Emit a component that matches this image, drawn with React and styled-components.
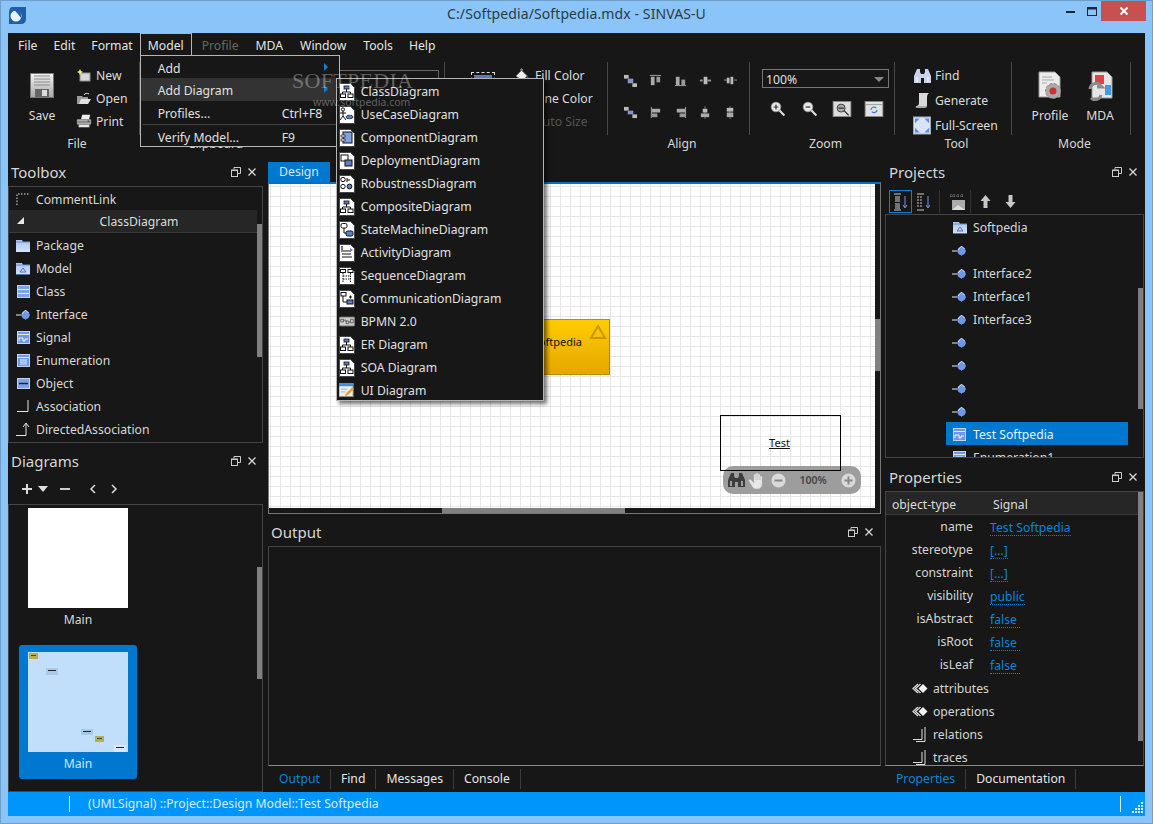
import React from "react";
import styled, { createGlobalStyle } from "styled-components";

const FONT = `"Noto Sans", "Open Sans", sans-serif`;
const FS = "12.2px";

const GlobalStyle = createGlobalStyle`
  html, body { margin: 0; padding: 0; background: #8ac4f9; }
  #root { width: 1153px; height: 824px; }
  * { box-sizing: border-box; }
`;

const Window = styled.div`
  position: relative; width: 1153px; height: 824px; overflow: hidden;
  background: #8ac4f9; box-shadow: inset 0 0 0 1px #6f9ecb;
  font: ${FS}/16px ${FONT}; color: #dcdcdc;
`;
const TitleBar = styled.div`
  height: 33px; display: grid; grid-template-columns: 1fr auto 1fr; align-items: start;
`;
const AppIcon = styled.div` padding: 7px 0 0 9px; height: 28px; `;
const Title = styled.div` font-size: 14px; line-height: 20px; padding-top: 4px; color: #2e3a46; letter-spacing: 0.1px; `;
const WinControls = styled.div` display: flex; justify-content: flex-end; align-items: flex-start; padding: 1px 7px 0 0; `;
const WinBtn = styled.div`
  width: ${p => p.$w}px; height: 20px; display: flex; align-items: center; justify-content: center;
  background: ${p => p.$bg || "transparent"};
`;
const Body = styled.div` margin: 0 8px; height: 783px; background: #171717; display: flex; flex-direction: column; `;
const MenuBar = styled.div` height: 25px; flex: none; display: flex; align-items: flex-start; padding-left: 2px; position: relative; z-index: 5; `;
const MenuItem = styled.div`
  position: relative; height: 22px; line-height: 23px; padding: 0 7px; margin-left: ${p => p.$ml || 0}px;
  color: ${p => (p.$disabled ? "#666" : "#e4e4e4")};
  border: 1px solid ${p => (p.$open ? "#b5b5b5" : "transparent")};
  border-bottom: 0;
`;
const Dropdown = styled.div`
  position: absolute; left: -1px; top: 21px; width: 200px; height: 92px; background: #171717;
  border: 1px solid #b5b5b5; z-index: 6;
`;
const DropRow = styled.div`
  display: flex; align-items: center; position: relative; height: ${p => p.$h || 23}px; padding: ${p => p.$pt || 0}px 0 0 17px;
  background: ${p => (p.$active ? "#333" : "transparent")};
  color: #e0e0e0; line-height: 16px;
`;
const Shortcut = styled.span` position: absolute; left: 141px; `;
const SubArrow = styled.span`
  position: absolute; left: 183px; top: 7px; width: 0; height: 0;
  border-left: 4px solid #0a80d8; border-top: 4px solid transparent; border-bottom: 4px solid transparent;
`;
const DropSep = styled.div` height: 1px; background: #444; margin: 0 2px; `;
const Submenu = styled.div`
  position: absolute; left: 195px; top: 0; width: 208px; height: 323px; padding-top: 1px;
  background: #171717; border: 1px solid #b5b5b5; box-shadow: 3px 3px 4px rgba(0,0,0,.55);
`;
const SubRow = styled.div` height: 23px; display: flex; align-items: center; gap: 6px; padding-left: 2px; color: #e0e0e0; `;
const SubIcon = styled.div` width: 16px; height: 18px; display: flex; align-items: center; justify-content: center; `;

const Ribbon = styled.div` height: 100px; flex: none; display: flex; padding-top: 4px; `;
const Group = styled.div` width: ${p => p.$w}px; flex: none; `;
const GroupBody = styled.div`
  height: 73px; border-right: 1px solid #484848;
  display: ${p => (p.$block ? "block" : "flex")}; padding: ${p => p.$pad || "0"};
`;
const GroupLabel = styled.div`
  text-align: center; padding-left: 6px; height: 20px; line-height: 18px; color: #d8d8d8;
`;
const BigBtn = styled.div`
  width: ${p => p.$w}px; flex: none; display: flex; flex-direction: column; align-items: center; padding-top: 6px;
`;
const BigIcon = styled.div` height: 35px; display: flex; align-items: center; justify-content: center; margin-bottom: 5px; width: 100%; `;
const Stack = styled.div` display: flex; flex-direction: column; padding-top: ${p => p.$top || 2}px; `;
const SmallBtn = styled.div`
  display: flex; flex: none; align-items: center; gap: ${p => p.$gap || 4}px; height: ${p => p.$h || 23}px;
  color: ${p => (p.$disabled ? "#555" : "#dcdcdc")}; white-space: nowrap;
`;
const IconBox = styled.div` width: ${p => p.$w || 16}px; height: 18px; display: flex; align-items: center; justify-content: center; flex: none; `;
const FontCombo = styled.div`
  margin: 8px 0 0 55px; width: 99px; height: 19px; border: 1px solid #666; border-left: 0; position: relative;
`;
const ComboArrow = styled.span`
  position: absolute; right: 4px; top: 7px; width: 0; height: 0;
  border-top: 5px solid #888; border-left: 5px solid transparent; border-right: 5px solid transparent;
`;
const DashBox = styled.div`
  width: 24px; height: 20px; margin: 10px 20px 0 26px; flex: none; border: 1px dashed #ddd;
  background: #5d7bb8; background-clip: content-box; padding: 2px;
`;
const AlignGrid = styled.div`
  display: grid; grid-template-columns: repeat(5, 25px); grid-auto-rows: 32px; padding: 2px 0 0 10px; align-items: center; justify-items: center;
`;
const ZoomCombo = styled.div`
  width: 127px; height: 19px; border: 1px solid #777; position: relative; padding-left: 3px; line-height: 19px; color: #e0e0e0;
`;
const ZoomRow = styled.div` display: grid; grid-template-columns: repeat(4, 32px); margin-top: 10px; justify-items: center; align-items: center; height: 22px; `;

const Main = styled.div` flex: 1; min-height: 0; display: flex; `;
const LeftCol = styled.div` width: 255px; margin-right: 5px; flex: none; display: flex; flex-direction: column; `;
const CenterCol = styled.div` width: 613px; margin-right: 4px; flex: none; display: flex; flex-direction: column; `;
const RightCol = styled.div` width: 259px; flex: none; display: flex; flex-direction: column; `;
const DockTitle = styled.div`
  height: ${p => p.$h || 28}px; flex: none; display: flex; align-items: center; justify-content: space-between;
  padding: ${p => p.$top || 0}px ${p => p.$r || 6}px 0 ${p => p.$l || 3}px; font-size: 15px; line-height: 20px; color: #d6d6d6; margin-top: ${p => p.$mt || 0}px;
`;
const DockBtns = styled.div` display: flex; gap: 6px; align-items: center; `;
const ListBox = styled.div`
  height: ${p => p.$h}px; flex: none; border: 1px solid #444; display: flex; overflow: hidden;
  ${p => (p.$foot ? `border-bottom-color: ${p.$foot};` : "")}
`;
const ListContent = styled.div` flex: 1; min-width: 0; overflow: hidden; `;
const Track = styled.div` width: 5px; flex: none; `;
const Thumb = styled.div` width: 5px; height: ${p => p.$h}px; margin-top: ${p => p.$top}px; background: #808080; `;
const ToolRow = styled.div` height: 23px; display: flex; align-items: center; gap: 5px; padding: 2px 0 0 6px; color: #d8d8d8; `;
const GroupHeader = styled.div`
  height: 23px; background: #262626; border-bottom: 1px solid #3a3a3a; display: flex; align-items: center; justify-content: center; position: relative; padding: 2px 0 0 12px;
`;
const Caret = styled.span`
  position: absolute; left: 8px; top: 7px; width: 0; height: 0;
  border-bottom: 7px solid #e8e8e8; border-left: 7px solid transparent;
`;
const DiagramBar = styled.div` height: 29px; flex: none; display: flex; align-items: center; padding: 0 0 1px 13px; `;
const DiagBtn = styled.div` width: ${p => p.$w}px; display: flex; justify-content: center; flex: none; `;
const Cards = styled.div` margin: -4px 0 0 10px; display: flex; flex-direction: column; gap: 10px; `;
const Card = styled.div`
  width: 118px; height: 134px; padding: 7px 9px 3px; border-radius: 3px; background: ${p => (p.$sel ? "#0078cf" : "transparent")};
`;
const Thumbnail = styled.div` position: relative; width: 100px; height: 100px; background: ${p => (p.$sel ? "#c1dffb" : "#fff")}; `;
const CardLabel = styled.div` height: 24px; line-height: 24px; text-align: center; color: ${p => (p.$sel ? "#cfe6fb" : "#d8d8d8")}; `;
const Mini = styled.div`
  position: absolute; left: ${p => p.$x}px; top: ${p => p.$y}px; width: ${p => p.$w}px; height: ${p => p.$h}px;
  background: ${p => p.$c}; display: flex; justify-content: center; padding-top: 2px;
  &::after { content: ""; width: 60%; height: 1px; background: ${p => p.$d}; }
`;

const TabStrip = styled.div` height: 24px; flex: none; padding-top: 4px; display: flex; `;
const DesignTab = styled.div` width: 62px; height: 20px; background: #0078cf; color: #dbe9f6; text-align: center; line-height: 20px; `;
const CanvasFrame = styled.div`
  height: 332px; flex: none; border: 1px solid #777; border-top: 2px solid #0072c6; display: flex; flex-direction: column;
`;
const CanvasRow = styled.div` flex: 1; min-height: 0; display: flex; `;
const Surface = styled.div`
  flex: 1; position: relative; overflow: hidden; background-color: #fff;
  background-image: linear-gradient(#e6e6e6 1px, transparent 1px), linear-gradient(90deg, #e6e6e6 1px, transparent 1px);
  background-size: 10px 10px; background-position: 1px 2px;
`;
const HTrack = styled.div` height: 5px; flex: none; `;
const HThumb = styled.div` height: 5px; width: ${p => p.$w}px; margin-left: ${p => p.$left}px; background: #808080; `;
const YellowNode = styled.div`
  position: absolute; left: 220px; top: 135px; width: 121px; height: 56px; border: 1px solid #b98b00;
  background: linear-gradient(#ffcc00, #e5a700); color: #111; font-size: 11px; line-height: 14px; text-align: right; padding: 15px 27px 0 0;
`;
const YellowTriangle = styled.svg` position: absolute; right: 2px; top: 4px; `;
const TestNode = styled.div`
  position: absolute; left: 451px; top: 231px; width: 121px; height: 56px; border: 1px solid #000; z-index: 2;
  display: flex; align-items: center; justify-content: center; color: #111; font-size: 11px; text-decoration: underline; padding-right: 2px;
`;
const ZoomPill = styled.div`
  position: absolute; left: 454px; top: 282px; width: 138px; height: 28px; border-radius: 10px; background: #9d9d9d; z-index: 1;
  display: grid; grid-template-columns: 16px 24px 20px 50px 20px; align-items: center; justify-items: center; padding-left: 5px;
`;
const PillText = styled.span` font-size: 10.5px; font-weight: 600; color: #444; `;
const OutputBox = styled.div` height: 220px; flex: none; border: 1px solid #444; border-bottom-color: #8a8a8a; `;
const BottomTabs = styled.div` height: 26px; flex: none; display: flex; padding: 3px 0 0 1px; `;
const BottomTab = styled.div`
  height: 20px; line-height: 20px; padding: 0 10px; border-right: 1px solid #3c3c3c;
  color: ${p => (p.$active ? "#0a84dc" : "#e6e6e6")};
`;
const ProjBar = styled.div` height: 28px; flex: none; display: flex; align-items: center; padding: 3px 0 0 4px; `;
const ProjBtn = styled.div`
  width: ${p => p.$w}px; height: 23px; flex: none; display: flex; align-items: center; justify-content: center;
  border: 1px solid ${p => (p.$sel ? "#0a7fd6" : "transparent")};
`;
const ProjSep = styled.div` width: 1px; height: 23px; background: #333; margin: 0 ${p => p.$r}px 0 ${p => p.$l}px; flex: none; `;
const TreeRow = styled.div`
  height: 23px; display: flex; align-items: center; gap: 6px; margin: 0 10px 0 60px; padding: 2px 0 0 6px;
  background: ${p => (p.$sel ? "#0078cf" : "transparent")}; color: ${p => (p.$sel ? "#e4f1fc" : "#d8d8d8")};
`;
const PropHeader = styled.div`
  height: 23px; background: #262626; border-bottom: 1px solid #3a3a3a; display: grid; grid-template-columns: 101px 1fr; padding: 3px 0 0 6px; align-items: center;
`;
const PropRow = styled.div` height: 23px; display: grid; grid-template-columns: 87px 1fr; column-gap: 17px; align-items: center; padding-top: 2px; `;
const PropLabel = styled.div` text-align: right; color: #d4d4d4; margin-top: -1px; `;
const PropValue = styled.span`
  justify-self: start; color: #0a84dc; border-bottom: 1px dotted #0a84dc; line-height: 15px; padding-right: ${p => p.$pr || 0}px;
`;
const PropNode = styled.div` height: 23px; display: flex; align-items: center; gap: 5px; padding: 2px 0 0 26px; color: #d4d4d4; `;
const StatusBar = styled.div` height: 24px; flex: none; background: #0095fb; display: flex; align-items: center; color: #d8edff; `;
const StatusSep = styled.div` width: 1px; height: 16px; background: #d8edff; margin-left: ${p => p.$l}px; flex: none; `;
const StatusText = styled.div` margin-left: 18px; width: 1032px; flex: none; white-space: nowrap; `;
const Grip = styled.svg` margin-left: 10px; margin-top: 6px; flex: none; `;
const Watermark = styled.div` position: absolute; left: 292px; top: 68px; z-index: 20; pointer-events: none; width: 140px; `;
const WmLogo = styled.div` font: 22px/25px "Liberation Serif", serif; letter-spacing: .3px; color: rgba(255,255,255,.33); `;
const WmUrl = styled.div` font: 10.5px/12px "Noto Sans", sans-serif; color: rgba(255,255,255,.33); margin: 3px 0 0 21px; `;

/* ---------- drawings ---------- */
const SaveIcon = () => (
  <svg width="24" height="25" viewBox="0 0 24 25">
    <defs><linearGradient id="sv" x1="0" y1="0" x2="0" y2="1"><stop offset="0" stopColor="#f2f2f2"/><stop offset="1" stopColor="#a8a8a8"/></linearGradient></defs>
    <rect x=".5" y=".5" width="23" height="24" fill="url(#sv)" stroke="#777"/>
    <path d="M4 3h16M4 6h16M4 9h16M4 12h16" stroke="#8a8a8a"/>
    <rect x="5" y="16" width="14" height="8" fill="#666"/><rect x="12" y="17" width="5" height="6" fill="#ddd"/>
  </svg>
);
const NewIcon = () => (
  <svg width="16" height="14" viewBox="0 0 16 14">
    <rect x="4" y="4" width="10" height="8" fill="#d8d8d8" stroke="#8c8c8c"/><path d="M4 0l1 2 2 1-2 1-1 2-1-2-2-1 2-1z" fill="#f2ee6a"/>
  </svg>
);
const OpenIcon = () => (
  <svg width="16" height="14" viewBox="0 0 16 14">
    <path d="M1 4h5l1 1h5v7H1z" fill="#9a9a9a"/><path d="M3 12l2-5h10l-3 5z" fill="#e2e2e2"/><path d="M8 3c1-2 3-2 5-1" fill="none" stroke="#ddd"/>
  </svg>
);
const PrintIcon = () => (
  <svg width="18" height="15" viewBox="0 0 18 15">
    <rect x="5" y="0" width="9" height="5" fill="#eee" transform="skewX(-15) translate(2 0)"/>
    <rect x="1" y="5" width="16" height="6" rx="1" fill="#aaa"/><rect x="3" y="11" width="12" height="3" fill="#e6e6e6"/>
    <path d="M1 8h16" stroke="#666"/><circle cx="14" cy="7" r="1" fill="#555"/>
  </svg>
);
const FillIcon = () => (
  <svg width="17" height="16" viewBox="0 0 17 16">
    <path d="M1 8l6-6 6 6-5 5z" fill="#f2f2f2" stroke="#777"/><path d="M6 2c0-2 2-2 2 0" fill="none" stroke="#ccc"/>
    <path d="M13 8c2 2 3 4 2 7h-2z" fill="#3d6fc4"/>
  </svg>
);
const DIAG = {
  class: <g><rect x="5" y="3" width="5" height="3" fill="#5b7fc4" stroke="#111" strokeWidth=".8"/><path d="M7.500 6v3M3.500 11V9h8v2" stroke="#111" fill="none"/><rect x="1.500" y="11" width="5" height="3.500" fill="#fff" stroke="#111"/><rect x="9" y="11" width="5" height="3.500" fill="#fff" stroke="#111"/></g>,
  usecase: <g><circle cx="4" cy="3.500" r="1.600" fill="none" stroke="#111"/><path d="M4 5v5M1 7h6M4 10l-3 4M4 10l3 4" stroke="#111" fill="none"/><ellipse cx="10.500" cy="11" rx="3.500" ry="1.800" fill="#5b7fc4" stroke="#111" strokeWidth=".7"/></g>,
  component: <g><rect x="4" y="3" width="9" height="11" fill="#7fa3e0" stroke="#111"/><rect x="2" y="6" width="4" height="2" fill="#fff" stroke="#111" strokeWidth=".7"/><rect x="2" y="10" width="4" height="2" fill="#fff" stroke="#111" strokeWidth=".7"/></g>,
  deployment: <g><rect x="2" y="3" width="7" height="6" fill="#fff" stroke="#111"/><rect x="6" y="8" width="7" height="6" fill="#5b7fc4" stroke="#111"/></g>,
  robustness: <g><circle cx="4" cy="4.500" r="2.200" fill="#fff" stroke="#111"/><path d="M8 3v4M8 5h3" stroke="#111"/><circle cx="4" cy="11.500" r="2.200" fill="#fff" stroke="#111"/><circle cx="10.500" cy="11.500" r="2.400" fill="#5b7fc4" stroke="#111"/></g>,
  state: <g><rect x="2" y="2.500" width="6" height="4.500" rx="1.500" fill="#fff" stroke="#111"/><path d="M5 7v5h2" stroke="#111" fill="none"/><rect x="7" y="10" width="7" height="5" rx="1.500" fill="#5b7fc4" stroke="#111"/></g>,
  activity: <g><path d="M3 2v4M2 7h10M3 10h9M3 13h10" stroke="#111" strokeWidth="1.200"/><path d="M11 4l3 2-3 2" fill="#5b7fc4"/></g>,
  sequence: <g><rect x="1.500" y="2.500" width="5" height="3" fill="#fff" stroke="#111"/><rect x="9" y="2.500" width="5" height="3" fill="#fff" stroke="#111"/><path d="M4 6v9M11.500 6v9M4 9h7M4 12h7" stroke="#111" strokeDasharray="1.500 1" fill="none"/></g>,
  comm: <g><rect x="2" y="2.500" width="5" height="3.500" fill="#fff" stroke="#111"/><path d="M4 6v6h4" stroke="#111" fill="none"/><rect x="8" y="10" width="6" height="4" fill="#5b7fc4" stroke="#111"/><path d="M10 7h3M11.500 5.500v3" stroke="#111"/></g>,
};
const DocIcon = ({ kind }) => (
  <svg width="16" height="18" viewBox="0 0 16 18">
    <path d="M.5.5h11l4 4v13H.5z" fill="#fff" stroke="#444"/>
    {DIAG[kind]}
  </svg>
);
const BpmnIcon = () => (
  <svg width="18" height="11" viewBox="0 0 18 11"><rect x=".5" y=".5" width="17" height="10" rx="1" fill="#cfcfcf" stroke="#777"/><path d="M2 3h3v3H2zM8 5h3v3H8zM13 3h3v4h-3zM5 4h3v2M11 6h2" fill="none" stroke="#555"/></svg>
);
const UiIcon = () => (
  <svg width="17" height="17" viewBox="0 0 17 17"><rect x="0" y="1" width="15" height="14" fill="#f0f0f0" stroke="#888"/><rect x="0" y="1" width="15" height="3" fill="#3d8fd8"/><path d="M2 7h7M2 10h5" stroke="#aaa"/><path d="M6 15l2-4 6-6 2 2-6 6z" fill="#e8a33a"/></svg>
);
const FolderIcon = ({ tri }) => (
  <svg width="14" height="14" viewBox="0 0 14 14">
    <defs><linearGradient id="fo" x1="0" y1="0" x2="0" y2="1"><stop offset="0" stopColor="#a8c4f5"/><stop offset="1" stopColor="#d6e4fb"/></linearGradient></defs>
    <path d="M0 1h6l1 2h7v10H0z" fill="url(#fo)"/><path d="M0 3h14" stroke="#6f8fcc"/>
    {tri && <path d="M4 10l3-4 3 4z" fill="none" stroke="#5270ad"/>}
    {tri && <path d="M0 12.500h14" stroke="#5270ad"/>}
  </svg>
);
const ClassIcon = () => (
  <svg width="13" height="13" viewBox="0 0 13 13"><rect x=".5" y=".5" width="12" height="12" fill="#7ea2e6" stroke="#b9cff5"/><path d="M1 4.500h11M1 8.500h11" stroke="#e7eefb"/></svg>
);
const LollipopIcon = () => (
  <svg width="15" height="12" viewBox="0 0 15 12"><path d="M0 6h5" stroke="#eee"/><path d="M5 6l4.500-5 4.500 5-4.500 5z" fill="#6f97e8"/><circle cx="9.500" cy="6" r="4" fill="#6f97e8"/><path d="M6 5l3.500-4 3 3" fill="none" stroke="#f0f4fc" strokeWidth=".8"/></svg>
);
const SignalIcon = () => (
  <svg width="13" height="13" viewBox="0 0 13 13"><rect x=".5" y=".5" width="12" height="12" fill="#6f97e8" stroke="#c2d4f5"/><path d="M1 3.500h11" stroke="#e7eefb"/><path d="M2 10V7h4v3h2V8h3" fill="none" stroke="#f2f6fd"/></svg>
);
const EnumIcon = () => (
  <svg width="13" height="13" viewBox="0 0 13 13"><rect x=".5" y=".5" width="12" height="12" fill="#6f97e8" stroke="#c2d4f5"/><path d="M1 3.500h11M3 6h7M3 8h7M3 10h7" stroke="#e7eefb"/></svg>
);
const ObjectIcon = () => (
  <svg width="13" height="11" viewBox="0 0 13 11"><rect x=".5" y=".5" width="12" height="10" fill="#7ea2e6" stroke="#c2d4f5"/><path d="M2 5.500h9" stroke="#223" strokeWidth="1.500"/></svg>
);
const AssocIcon = () => (
  <svg width="14" height="13" viewBox="0 0 14 13"><path d="M1 11.500h11V0" fill="none" stroke="#e6e6e6"/></svg>
);
const DirAssocIcon = () => (
  <svg width="14" height="15" viewBox="0 0 14 15"><path d="M0 13.500h10V2M7 5l3-4 3 4" fill="none" stroke="#e6e6e6"/></svg>
);
const CommentLinkIcon = () => (
  <svg width="14" height="13" viewBox="0 0 14 13"><path d="M1 12V1h13" fill="none" stroke="#e6e6e6" strokeDasharray="1.500 1.500"/></svg>
);
const ALIGN = [
  [[0, 1, 5, 4, "#bbb"], [4, 5, 6, 5, "#7e99c9"], [9, 10, 5, 4, "#bbb"]],
  [[1, 1, 12, 1, "#aaa"], [2, 3, 4, 9, "#aaa"], [8, 3, 4, 6, "#999"]],
  [[1, 12, 12, 1, "#aaa"], [2, 3, 4, 9, "#aaa"], [8, 6, 4, 6, "#999"]],
  [[1, 6, 3, 2, "#999"], [5, 3, 4, 8, "#bbb"], [9, 6, 4, 2, "#999"]],
  [[0, 6, 3, 1, "#999"], [3, 4, 3, 6, "#bbb"], [7, 3, 3, 8, "#bbb"], [11, 6, 3, 1, "#999"]],
  [[0, 1, 5, 4, "#bbb"], [4, 5, 6, 4, "#7e99c9"], [9, 9, 5, 4, "#bbb"]],
  [[2, 1, 1, 12, "#aaa"], [3, 3, 9, 4, "#aaa"], [3, 8, 6, 4, "#999"]],
  [[12, 1, 1, 12, "#aaa"], [3, 3, 9, 4, "#aaa"], [6, 8, 6, 4, "#999"]],
  [[6, 0, 1, 14, "#777"], [4, 3, 5, 4, "#bbb"], [2, 8, 9, 4, "#aaa"]],
  [[6, 0, 1, 14, "#777"], [3, 2, 7, 4, "#bbb"], [3, 7, 7, 5, "#aaa"]],
];
const AlignIcon = ({ rects }) => (
  <svg width="13" height="13" viewBox="0 0 14 14">
    {rects.map((r, i) => <rect key={i} x={r[0]} y={r[1]} width={r[2]} height={r[3]} fill={r[4]} />)}
  </svg>
);
const MagIcon = ({ sign }) => (
  <svg width="16" height="16" viewBox="0 0 20 20">
    <path d="M11 11l7 7" stroke="#ddd" strokeWidth="2.600"/><circle cx="7.500" cy="7.500" r="6" fill="#e8e8e8" stroke="#999"/>
    <path d={sign === "+" ? "M4.500 7.500h6M7.500 4.500v6" : "M4.500 7.500h6"} stroke="#333" strokeWidth="1.500"/>
  </svg>
);
const FrameMagIcon = () => (
  <svg width="20" height="16" viewBox="0 0 21 18"><rect x=".5" y=".5" width="20" height="17" fill="#ddd" stroke="#888"/><circle cx="9.500" cy="8" r="4.500" fill="#aaa" stroke="#333"/><path d="M6.500 8h6M13 11l5 5" stroke="#333" strokeWidth="1.300"/></svg>
);
const FrameRefreshIcon = () => (
  <svg width="20" height="16" viewBox="0 0 21 18"><rect x=".5" y=".5" width="20" height="17" fill="#e2e2e2" stroke="#888"/><path d="M1 4h19" stroke="#999"/><path d="M7 10a3.500 3.500 0 0 1 6-2M14 10a3.500 3.500 0 0 1-6 2" fill="none" stroke="#3f78e0" strokeWidth="1.300"/></svg>
);
const BinocIcon = ({ c = "#c9d4ea" }) => (
  <svg width="17" height="16" viewBox="0 0 17 16">
    <path d="M3 1h3v3l1 2v9H0V8z" fill={c}/><path d="M14 1h-3v3l-1 2v9h7V8z" fill={c}/><rect x="7" y="6" width="3" height="4" fill={c}/>
    <path d="M3 9v5M14 9v5" stroke="#fff"/>
  </svg>
);
const ScrollIcon = () => (
  <svg width="15" height="17" viewBox="0 0 15 17"><path d="M4 1h10c-1 1-2 2-2 4v9H1c2 0 3-1 3-3z" fill="#d8d8d8"/><path d="M1 14c-1 1 0 2 1 2h8c1 0 2-1 2-2z" fill="#aaa"/></svg>
);
const FullIcon = () => (
  <svg width="19" height="19" viewBox="0 0 19 19"><rect x=".5" y=".5" width="18" height="18" fill="#d8e4fa" stroke="#aaa"/><path d="M2 2h5L2 7zM17 2h-5l5 5zM2 17h5l-5-5zM17 17h-5l5-5z" fill="#5b8de0"/></svg>
);
const ProfileIcon = () => (
  <svg width="28" height="30" viewBox="0 0 28 30">
    <path d="M3 1h16l5 5v20H3z" fill="#ececec" stroke="#999"/><path d="M6 6h10M6 9h12M6 12h5" stroke="#aaa"/>
    <circle cx="17" cy="20" r="7.500" fill="#aaa" stroke="#888" strokeDasharray="3 1.500"/><circle cx="17" cy="20" r="3.500" fill="#c8323a"/>
  </svg>
);
const MdaIcon = () => (
  <svg width="28" height="30" viewBox="0 0 28 30">
    <path d="M6 1h15l5 5v21H6z" fill="#e6e6e6" stroke="#999"/><rect x="9" y="4" width="9" height="9" fill="#e0404a"/>
    <rect x="19" y="14" width="6" height="10" fill="#3f9be8"/>
    <path d="M4 18a6 6 0 0 1 10-4l2 2h-5M15 24a6 6 0 0 1-10 3" fill="none" stroke="#8b8b8b" strokeWidth="3"/>
  </svg>
);
const FloatIcon = () => (
  <svg width="10" height="10" viewBox="0 0 10 10"><path d="M3 2.500V.5h6.500v6H7" fill="none" stroke="#ccc"/><rect x=".5" y="3" width="6" height="6.500" fill="none" stroke="#ccc"/><path d="M1 3.500h5" stroke="#ccc"/></svg>
);
const CloseIcon = () => (
  <svg width="10" height="10" viewBox="0 0 10 10"><path d="M1.500 1.500l7 7M8.500 1.500l-7 7" stroke="#ddd" strokeWidth="1.200"/></svg>
);
const SortNumIcon = ({ az }) => (
  <svg width="16" height="18" viewBox="0 0 16 18">
    <path d="M1 1h7M1 17h7" stroke="#ccc"/>
    {az ? <path d="M1 4h6M1 7h6M1 10h6M1 13h6" stroke="#ccc" strokeDasharray="2 1"/> : <path d="M2 4h5M2 6h5M2 8h5M2 11h5M2 13h5M2 15h5" stroke="#ccc"/>}
    <path d="M12 3v11M10 12l2 3 2-3" fill="none" stroke="#6f97e8"/>
  </svg>
);
const ProjFrameIcon = () => (
  <svg width="16" height="18" viewBox="0 0 16 18"><path d="M1 1v3M4 1v3M8 1v3M12 1v3M0 3h14" stroke="#888" strokeDasharray="1 1"/><rect x="2" y="7" width="13" height="10" fill="#aaa"/><path d="M2 17l6-5 7 5z" fill="#ddd"/></svg>
);
const UpArrow = () => (
  <svg width="11" height="13" viewBox="0 0 11 13"><path d="M5.500 0l5 6H7.500v7h-4V6H.5z" fill="#c8c8c8"/></svg>
);
const DownArrow = () => (
  <svg width="11" height="13" viewBox="0 0 11 13"><path d="M5.500 13l5-6H7.500V0h-4v7H.5z" fill="#c8c8c8"/></svg>
);
const StackIcon = () => (
  <svg width="16" height="11" viewBox="0 0 16 11"><path d="M6 1L1 5.500 6 10M8.500 1l-5 4.500 5 4.500" fill="none" stroke="#ddd" strokeWidth="1.200"/><path d="M11 1l4.500 4.500L11 10 6.500 5.500z" fill="#f0f0f0"/></svg>
);
const RelIcon = () => (
  <svg width="16" height="15" viewBox="0 0 16 15"><path d="M1 12.500h9V2M4 14.500h9V0" fill="none" stroke="#ddd"/></svg>
);
const PillBinoc = () => <BinocIcon c="#3d3d3d" />;
const HandIcon = () => (
  <svg width="16" height="17" viewBox="0 0 16 17">
    <path d="M1 9l3 5c1 2 2 3 5 3s5-2 5-5V5a1 1 0 0 0-2 0v3V3a1 1 0 0 0-2 0v5V2a1 1 0 0 0-2 0v6V3a1 1 0 0 0-2 0v8L3 8C2 7 0 8 1 9z" fill="#e8e8e8" stroke="#bdbdbd" strokeWidth=".5"/>
  </svg>
);
const RoundBtn = ({ plus }) => (
  <svg width="15" height="15" viewBox="0 0 15 15"><circle cx="7.500" cy="7.500" r="7" fill="#d9d9d9"/><path d={plus ? "M3.500 7.500h8M7.500 3.500v8" : "M3.500 7.500h8"} stroke="#888" strokeWidth="2"/></svg>
);

const SUBMENU = [
  ["ClassDiagram", "class"], ["UseCaseDiagram", "usecase"], ["ComponentDiagram", "component"], ["DeploymentDiagram", "deployment"],
  ["RobustnessDiagram", "robustness"], ["CompositeDiagram", "class"], ["StateMachineDiagram", "state"], ["ActivityDiagram", "activity"],
  ["SequenceDiagram", "sequence"], ["CommunicationDiagram", "comm"], ["BPMN 2.0", "bpmn"], ["ER Diagram", "class"], ["SOA Diagram", "class"], ["UI Diagram", "ui"],
];
const TOOLS = [
  ["Package", <FolderIcon />], ["Model", <FolderIcon tri />], ["Class", <ClassIcon />], ["Interface", <LollipopIcon />], ["Signal", <SignalIcon />],
  ["Enumeration", <EnumIcon />], ["Object", <ObjectIcon />], ["Association", <AssocIcon />], ["DirectedAssociation", <DirAssocIcon />],
];
const TREE = [
  ["Softpedia", <FolderIcon tri />], ["", <LollipopIcon />], ["Interface2", <LollipopIcon />], ["Interface1", <LollipopIcon />], ["Interface3", <LollipopIcon />],
  ["", <LollipopIcon />], ["", <LollipopIcon />], ["", <LollipopIcon />], ["", <LollipopIcon />], ["Test Softpedia", <SignalIcon />, true], ["Enumeration1", <EnumIcon />],
];
const PROPS = [["name", "Test Softpedia", 0], ["stereotype", "[...]", 0], ["constraint", "[...]", 0], ["visibility", "public", 0], ["isAbstract", "false", 3], ["isRoot", "false", 3], ["isLeaf", "false", 3]];
const NODES = [["attributes", <StackIcon />], ["operations", <StackIcon />], ["relations", <RelIcon />], ["traces", <RelIcon />]];
const MINIS = [[1, 1, 9, 6, "#b9ae4c", "#444"], [18, 16, 12, 7, "#a9c9ea", "#223"], [53, 77, 12, 6, "#a9c9ea", "#223"], [67, 84, 9, 6, "#b9ae4c", "#444"], [86, 93, 12, 7, "#d7e9fb", "#223"]];

const DockHeader = ({ title, ...rest }) => (
  <DockTitle {...rest}>
    <span>{title}</span>
    <DockBtns><FloatIcon /><CloseIcon /></DockBtns>
  </DockTitle>
);

export default function App() {
  return (
    <Window>
      <GlobalStyle />
      <TitleBar>
        <AppIcon>
          <svg width="17" height="17" viewBox="0 0 17 17">
            <path d="M3 0h14v12c0 3-2 5-5 5H0V6c0-3 1-6 3-6z" fill="#1f5fa8"/>
            <circle cx="7" cy="9" r="5.500" fill="#e9f2fb"/><path d="M5 3c5-1 8 2 7 8-2-3-4-5-7-8z" fill="#1f5fa8"/>
          </svg>
        </AppIcon>
        <Title>C:/Softpedia/Softpedia.mdx - SINVAS-U</Title>
        <WinControls>
          <WinBtn $w={24}><svg width="9" height="3" viewBox="0 0 9 3"><rect width="9" height="2" y="1" fill="#1c2733"/></svg></WinBtn>
          <WinBtn $w={19}><svg width="10" height="9" viewBox="0 0 10 9"><rect x=".5" y=".5" width="9" height="8" fill="none" stroke="#1c2733"/><path d="M0 1.500h10" stroke="#1c2733" strokeWidth="2"/></svg></WinBtn>
          <WinBtn $w={45} $bg="#c75050"><svg width="10" height="10" viewBox="0 0 10 10"><path d="M1.500 1.500l7 7M8.500 1.500l-7 7" stroke="#fff" strokeWidth="2"/></svg></WinBtn>
        </WinControls>
      </TitleBar>
      <Body>
        <MenuBar>
          <MenuItem>File</MenuItem>
          <MenuItem>Edit</MenuItem>
          <MenuItem>Format</MenuItem>
          <MenuItem $open $ml={-1}>Model
            <Dropdown>
              <DropRow $h={22} $pt={3}>Add<SubArrow /></DropRow>
              <DropRow $active $pt={2}>Add Diagram<SubArrow />
                <Submenu>
                  {SUBMENU.map(([label, kind]) => (
                    <SubRow key={label}>
                      <SubIcon>{kind === "bpmn" ? <BpmnIcon /> : kind === "ui" ? <UiIcon /> : <DocIcon kind={kind} />}</SubIcon>
                      {label}
                    </SubRow>
                  ))}
                </Submenu>
              </DropRow>
              <DropRow $h={23} $pt={2}>Profiles...<Shortcut>Ctrl+F8</Shortcut></DropRow>
              <DropSep />
              <DropRow $h={22} $pt={3}>Verify Model...<Shortcut>F9</Shortcut></DropRow>
            </Dropdown>
          </MenuItem>
          <MenuItem $disabled $ml={2}>Profile</MenuItem>
          <MenuItem $ml={1}>MDA</MenuItem>
          <MenuItem $ml={1}>Window</MenuItem>
          <MenuItem $ml={1}>Tools</MenuItem>
          <MenuItem>Help</MenuItem>
        </MenuBar>
        <Ribbon>
          <Group $w={132}>
            <GroupBody>
              <BigBtn $w={68}><BigIcon><SaveIcon /></BigIcon>Save</BigBtn>
              <Stack>
                <SmallBtn><IconBox><NewIcon /></IconBox>New</SmallBtn>
                <SmallBtn><IconBox><OpenIcon /></IconBox>Open</SmallBtn>
                <SmallBtn><IconBox><PrintIcon /></IconBox>Print</SmallBtn>
              </Stack>
            </GroupBody>
            <GroupLabel>File</GroupLabel>
          </Group>
          <Group $w={145}><GroupBody /><GroupLabel>Clipboard</GroupLabel></Group>
          <Group $w={160}><GroupBody><FontCombo><ComboArrow /></FontCombo></GroupBody><GroupLabel /></Group>
          <Group $w={163}>
            <GroupBody>
              <DashBox />
              <Stack>
                <SmallBtn><IconBox><FillIcon /></IconBox>Fill Color</SmallBtn>
                <SmallBtn><IconBox />Line Color</SmallBtn>
                <SmallBtn $disabled><IconBox />Auto Size</SmallBtn>
              </Stack>
            </GroupBody>
            <GroupLabel />
          </Group>
          <Group $w={142}>
            <GroupBody $block>
              <AlignGrid>{ALIGN.map((r, i) => <AlignIcon key={i} rects={r} />)}</AlignGrid>
            </GroupBody>
            <GroupLabel>Align</GroupLabel>
          </Group>
          <Group $w={145}>
            <GroupBody $block $pad="7px 0 0 12px">
              <ZoomCombo>100%<ComboArrow /></ZoomCombo>
              <ZoomRow><MagIcon sign="+" /><MagIcon sign="-" /><FrameMagIcon /><FrameRefreshIcon /></ZoomRow>
            </GroupBody>
            <GroupLabel>Zoom</GroupLabel>
          </Group>
          <Group $w={117}>
            <GroupBody $pad="0 0 0 18px">
              <Stack $top={1}>
                <SmallBtn $h={25}><IconBox $w={18}><BinocIcon /></IconBox>Find</SmallBtn>
                <SmallBtn $h={25}><IconBox $w={18}><ScrollIcon /></IconBox>Generate</SmallBtn>
                <SmallBtn $h={25}><IconBox $w={18}><FullIcon /></IconBox>Full-Screen</SmallBtn>
              </Stack>
            </GroupBody>
            <GroupLabel>Tool</GroupLabel>
          </Group>
          <Group $w={119}>
            <GroupBody $pad="0 0 0 13px">
              <BigBtn $w={50}><BigIcon><ProfileIcon /></BigIcon>Profile</BigBtn>
              <BigBtn $w={50}><BigIcon><MdaIcon /></BigIcon>MDA</BigBtn>
            </GroupBody>
            <GroupLabel>Mode</GroupLabel>
          </Group>
        </Ribbon>
        <Main>
          <LeftCol>
            <DockHeader title="Toolbox" />
            <ListBox $h={257}>
              <ListContent>
                <ToolRow><IconBox><CommentLinkIcon /></IconBox>CommentLink</ToolRow>
                <GroupHeader><Caret />ClassDiagram</GroupHeader>
                {TOOLS.map(([label, icon]) => <ToolRow key={label}><IconBox>{icon}</IconBox>{label}</ToolRow>)}
              </ListContent>
              <Track><Thumb $top={37} $h={133} /></Track>
            </ListBox>
            <DockHeader title="Diagrams" $mt={4} />
            <DiagramBar>
              <DiagBtn $w={12}><svg width="10" height="10" viewBox="0 0 10 10"><path d="M0 5h10M5 0v10" stroke="#ddd" strokeWidth="2"/></svg></DiagBtn>
              <DiagBtn $w={20}><svg width="10" height="6" viewBox="0 0 10 6"><path d="M0 0h10L5 6z" fill="#ddd"/></svg></DiagBtn>
              <DiagBtn $w={24}><svg width="10" height="2" viewBox="0 0 10 2"><path d="M0 1h10" stroke="#ccc" strokeWidth="2"/></svg></DiagBtn>
              <DiagBtn $w={30}><svg width="7" height="10" viewBox="0 0 7 10"><path d="M6 1L2 5l4 4" fill="none" stroke="#ddd" strokeWidth="1.500"/></svg></DiagBtn>
              <DiagBtn $w={14}><svg width="7" height="10" viewBox="0 0 7 10"><path d="M1 1l4 4-4 4" fill="none" stroke="#ddd" strokeWidth="1.500"/></svg></DiagBtn>
            </DiagramBar>
            <ListBox $h={288}>
              <ListContent>
                <Cards>
                  <Card><Thumbnail /><CardLabel>Main</CardLabel></Card>
                  <Card $sel>
                    <Thumbnail $sel>{MINIS.map((m, i) => <Mini key={i} $x={m[0]} $y={m[1]} $w={m[2]} $h={m[3]} $c={m[4]} $d={m[5]} />)}</Thumbnail>
                    <CardLabel $sel>Main</CardLabel>
                  </Card>
                </Cards>
              </ListContent>
              <Track><Thumb $top={62} $h={112} /></Track>
            </ListBox>
          </LeftCol>
          <CenterCol>
            <TabStrip><DesignTab>Design</DesignTab></TabStrip>
            <CanvasFrame>
              <CanvasRow>
                <Surface>
                  <YellowNode>
                    Test Softpedia
                    <YellowTriangle width="18" height="16" viewBox="0 0 18 16"><path d="M9 2l7 12H2z" fill="none" stroke="#c99500" strokeWidth="2"/></YellowTriangle>
                  </YellowNode>
                  <TestNode>Test</TestNode>
                  <ZoomPill>
                    <PillBinoc /><HandIcon /><RoundBtn /><PillText>100%</PillText><RoundBtn plus />
                  </ZoomPill>
                </Surface>
                <Track><Thumb $top={135} $h={52} /></Track>
              </CanvasRow>
              <HTrack><HThumb $left={173} $w={183} /></HTrack>
            </CanvasFrame>
            <DockHeader title="Output" $h={32} $top={4} $r={7} />
            <OutputBox />
            <BottomTabs>
              <BottomTab $active>Output</BottomTab>
              <BottomTab>Find</BottomTab>
              <BottomTab>Messages</BottomTab>
              <BottomTab>Console</BottomTab>
            </BottomTabs>
          </CenterCol>
          <RightCol>
            <DockHeader title="Projects" $l={4} $r={6} />
            <ProjBar>
              <ProjBtn $w={23} $sel><SortNumIcon /></ProjBtn>
              <ProjBtn $w={24}><SortNumIcon az /></ProjBtn>
              <ProjSep $l={3} $r={6} />
              <ProjBtn $w={23}><ProjFrameIcon /></ProjBtn>
              <ProjSep $l={1} $r={3} />
              <ProjBtn $w={23}><UpArrow /></ProjBtn>
              <ProjBtn $w={27}><DownArrow /></ProjBtn>
            </ProjBar>
            <ListBox $h={244}>
              <ListContent>
                {TREE.map(([label, icon, sel], i) => (
                  <TreeRow key={i} $sel={sel}><IconBox $w={15}>{icon}</IconBox>{label}</TreeRow>
                ))}
              </ListContent>
              <Track><Thumb $top={73} $h={121} /></Track>
            </ListBox>
            <DockHeader title="Properties" $h={33} $top={5} $l={4} $r={6} />
            <ListBox $h={275} $foot="#8a8a8a">
              <ListContent>
                <PropHeader><span>object-type</span><span>Signal</span></PropHeader>
                {PROPS.map(([k, v, pr]) => (
                  <PropRow key={k}><PropLabel>{k}</PropLabel><PropValue $pr={pr}>{v}</PropValue></PropRow>
                ))}
                {NODES.map(([k, icon]) => <PropNode key={k}><IconBox>{icon}</IconBox>{k}</PropNode>)}
              </ListContent>
              <Track><Thumb $top={0} $h={249} /></Track>
            </ListBox>
            <BottomTabs>
              <BottomTab $active>Properties</BottomTab>
              <BottomTab>Documentation</BottomTab>
            </BottomTabs>
          </RightCol>
        </Main>
        <StatusBar>
          <StatusSep $l={61} />
          <StatusText>(UMLSignal) ::Project::Design Model::Test Softpedia</StatusText>
          <StatusSep $l={0} />
          <Grip width="12" height="11" viewBox="0 0 12 11">
            {[[10, 0], [7, 3], [10, 3], [4, 6], [7, 6], [10, 6], [1, 9], [4, 9], [7, 9], [10, 9]].map(([x, y], i) => <rect key={i} x={x} y={y} width="2" height="2" fill="#e6f3ff" />)}
          </Grip>
        </StatusBar>
      </Body>
      <Watermark>
        <WmLogo>SOFTPEDIA</WmLogo>
        <WmUrl>www.softpedia.com</WmUrl>
      </Watermark>
    </Window>
  );
}
